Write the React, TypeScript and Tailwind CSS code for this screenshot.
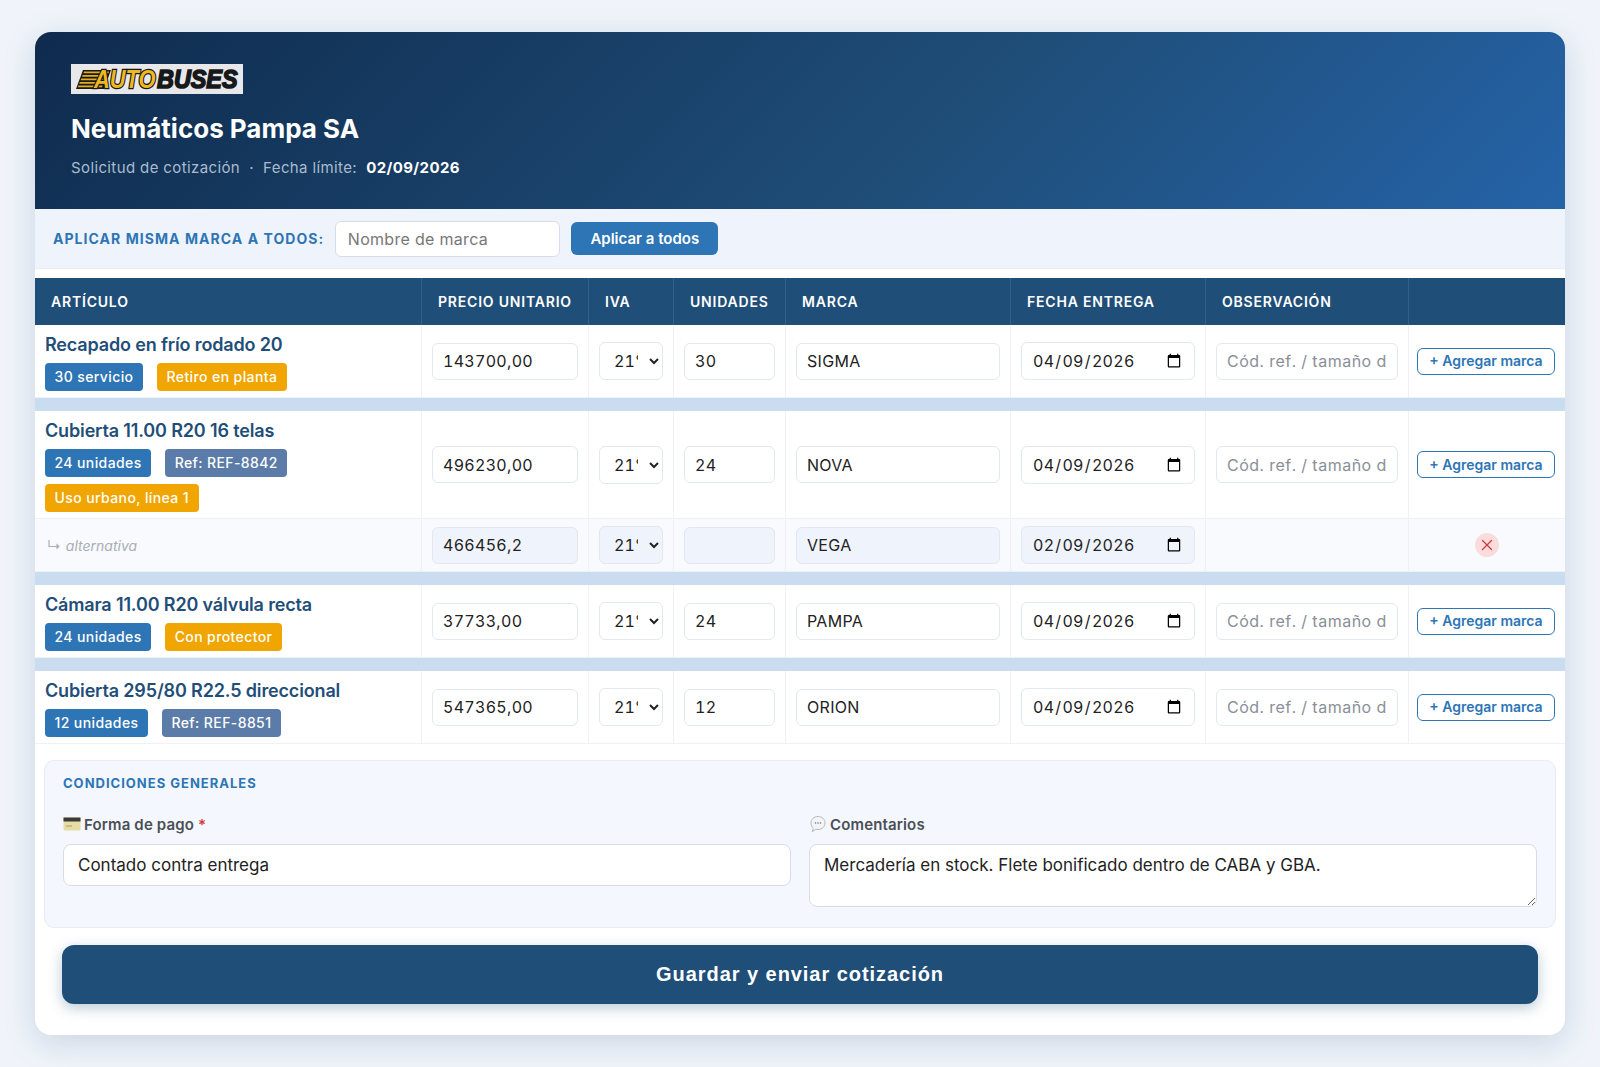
const ink = "font-['Inter','Noto_Sans',sans-serif]"

const fieldBase =
  "h-[37px] w-full rounded-[6px] border border-[#e2e7f0] px-[10px] text-[16px] tabular-nums tracking-[0.3px] text-[#222] outline-none placeholder:tracking-[0.5px] placeholder:text-[#8a8f98]"

const Logo = () => (
  <svg width="172" height="30" viewBox="0 0 172 30" className="block">
    <rect width="172" height="30" fill="#e8e8ea" />
    <polygon points="12,6 40,6 33,25 5,25" fill="#17181a" />
    <g fill="#e3ac1c">
      <polygon points="13,7.500 38,7.500 37.400,9.300 12.400,9.300" />
      <polygon points="11.600,11 36,11 35.400,12.800 11,12.800" />
      <polygon points="10.200,14.500 34.600,14.500 34,16.300 9.600,16.300" />
      <polygon points="8.800,18 33,18 32.400,19.800 8.200,19.800" />
      <polygon points="7.400,21.500 31.600,21.500 31,23.300 6.800,23.300" />
    </g>
    <text transform="translate(23 24) scale(0.84 1)" fontFamily="'Liberation Sans',sans-serif" fontWeight="700" fontStyle="italic" fontSize="26" fill="#eeb91f" stroke="#17181a" strokeWidth="2.6" paintOrder="stroke">AUTO</text>
    <text transform="translate(86 24) scale(0.9 1)" fontFamily="'Liberation Sans',sans-serif" fontWeight="700" fontStyle="italic" fontSize="26" fill="#17181a" stroke="#17181a" strokeWidth="1.6">BUSES</text>
  </svg>
)

const Badge = ({ tone, children }: { tone: string; children: string }) => (
  <span className={`inline-flex h-[28px] items-center rounded-[4px] px-[9.5px] pb-px text-[14px] font-medium tracking-[0.4px] text-white ${tone}`}>
    {children}
  </span>
)

const Cell = ({ children, className = "" }: { children?: React.ReactNode; className?: string }) => (
  <td className={`border-b border-r border-[#eef1f6] p-[10px] align-middle last:border-r-0 ${className}`}>{children}</td>
)

const IvaSelect = ({ alt }: { alt?: boolean }) => (
  <select
    defaultValue="21"
    className={`h-[38px] w-full rounded-[6px] border border-[#e2e7f0] pl-[10px] pr-[8px] text-[16px] tabular-nums text-[#222] outline-none ${alt ? "bg-[#eff3fb]" : "bg-white"}`}
  >
    <option value="21">21%</option>
    <option value="10">10.5%</option>
  </select>
)

const DateInput = ({ value, alt }: { value: string; alt?: boolean }) => (
  <input
    type="date"
    defaultValue={value}
    className={`h-[38px] w-full rounded-[6px] border border-[#e2e7f0] px-[10px] text-[16px] tabular-nums tracking-[0.3px] text-[#222] outline-none ${alt ? "bg-[#eff3fb]" : "bg-white"}`}
  />
)

type Item = {
  name: string
  badges: { text: string; tone: string }[]
  price: string
  qty: string
  brand: string
}

const blue = "bg-[#2e75b6]"
const slate = "bg-[#5b7ba8]"
const amber = "bg-[#f0a500]"

const items: Item[] = [
  {
    name: "Recapado en frío rodado 20",
    badges: [
      { text: "30 servicio", tone: blue },
      { text: "Retiro en planta", tone: amber },
    ],
    price: "143700,00",
    qty: "30",
    brand: "SIGMA",
  },
  {
    name: "Cubierta 11.00 R20 16 telas",
    badges: [
      { text: "24 unidades", tone: blue },
      { text: "Ref: REF-8842", tone: slate },
      { text: "Uso urbano, línea 1", tone: amber },
    ],
    price: "496230,00",
    qty: "24",
    brand: "NOVA",
  },
  {
    name: "Cámara 11.00 R20 válvula recta",
    badges: [
      { text: "24 unidades", tone: blue },
      { text: "Con protector", tone: amber },
    ],
    price: "37733,00",
    qty: "24",
    brand: "PAMPA",
  },
  {
    name: "Cubierta 295/80 R22.5 direccional",
    badges: [
      { text: "12 unidades", tone: blue },
      { text: "Ref: REF-8851", tone: slate },
    ],
    price: "547365,00",
    qty: "12",
    brand: "ORION",
  },
]

const heads = ["Artículo", "Precio unitario", "IVA", "Unidades", "Marca", "Fecha entrega", "Observación", ""]

const Row = ({ item }: { item: Item }) => (
  <tr>
    <Cell className="pb-[6px] pt-[8px]">
      <div className="text-[18px] font-semibold leading-[24px] tracking-[-0.15px] text-[#1f4e79]">{item.name}</div>
      <div className="mt-[6px] flex flex-wrap gap-x-[14px] gap-y-[7px]">
        {item.badges.map((b) => (
          <Badge key={b.text} tone={b.tone}>{b.text}</Badge>
        ))}
      </div>
    </Cell>
    <Cell><input defaultValue={item.price} className={`${fieldBase} bg-white`} /></Cell>
    <Cell><IvaSelect /></Cell>
    <Cell><input defaultValue={item.qty} className={`${fieldBase} bg-white`} /></Cell>
    <Cell><input defaultValue={item.brand} className={`${fieldBase} bg-white`} /></Cell>
    <Cell><DateInput value="2026-04-09" /></Cell>
    <Cell><input placeholder="Cód. ref. / tamaño de cubierta" className={`${fieldBase} bg-white`} /></Cell>
    <Cell className="pl-[8px]">
      <button className="block h-[27px] w-full rounded-[6px] border border-[#2e75b6] bg-white pb-px text-[14px] font-semibold text-[#2e75b6]">
        + Agregar marca
      </button>
    </Cell>
  </tr>
)

const AltRow = () => (
  <tr className="bg-[#f8fafd]">
    <Cell className="py-[7px] pl-[12px]">
      <span className="text-[14px] italic text-[#a9aeb6]">
        <span className="mr-[5px] not-italic">↳</span>alternativa
      </span>
    </Cell>
    <Cell className="py-[7px]"><input defaultValue="466456,2" className={`${fieldBase} bg-[#eff3fb]`} /></Cell>
    <Cell className="py-[7px]"><IvaSelect alt /></Cell>
    <Cell className="py-[7px]"><input className={`${fieldBase} bg-[#eff3fb]`} /></Cell>
    <Cell className="py-[7px]"><input defaultValue="VEGA" className={`${fieldBase} bg-[#eff3fb]`} /></Cell>
    <Cell className="py-[7px]"><DateInput value="2026-02-09" alt /></Cell>
    <Cell className="py-[7px]" />
    <Cell className="py-[7px] text-center">
      <button className="inline-flex h-[24px] w-[24px] items-center justify-center rounded-full bg-[#fbdcdc]">
        <svg width="12" height="12" viewBox="0 0 12 12" fill="none" stroke="#d0393e" strokeWidth="1.3" strokeLinecap="round">
          <path d="M1.5 1.5l9 9M10.5 1.5l-9 9" />
        </svg>
      </button>
    </Cell>
  </tr>
)

const Spacer = () => (
  <tr>
    <td colSpan={8} className="h-[13px] bg-[#c9dcf0] p-0" />
  </tr>
)

const CardIcon = () => (
  <svg width="18" height="16" viewBox="0 0 18 16" className="mr-[3px] inline-block align-[-2px]">
    <rect x="0.5" y="1.5" width="17" height="13" rx="1" fill="#e6dda6" />
    <rect x="0.5" y="1.5" width="17" height="4" fill="#3a3a3a" />
    <rect x="3" y="9" width="6" height="2" fill="#c9bd80" />
  </svg>
)

const ChatIcon = () => (
  <svg width="18" height="18" viewBox="0 0 18 18" className="mr-[3px] inline-block align-[-3px]">
    <path d="M9 1.500c4 0 7 2.800 7 6.500s-3 6.500-7 6.500c-.8 0-1.500-.1-2.200-.3-.9 1.200-2.200 1.900-3.800 2.100.8-.8 1.200-1.800 1.200-3C2.900 12 2 10.100 2 8c0-3.700 3-6.500 7-6.500z" fill="#f3f4f6" stroke="#b4b8bf" />
    <circle cx="6.500" cy="8" r="0.800" fill="#777" />
    <circle cx="9" cy="8" r="0.800" fill="#777" />
    <circle cx="11.500" cy="8" r="0.800" fill="#777" />
  </svg>
)

export default function App() {
  return (
    <div className={`min-h-screen bg-[#f0f4fa] px-[35px] pb-[31px] pt-[32px] ${ink}`}>
      <div className="overflow-hidden rounded-[16px] bg-white shadow-[0_8px_32px_rgba(31,78,121,0.18)]">
        <header className="h-[177px] bg-[linear-gradient(135deg,#0f2b4e_0%,#1f4e79_60%,#2563a8_100%)] px-[36px] pt-[32px]">
          <Logo />
          <h1 className="mt-[19px] text-[26px] font-bold leading-[32px] text-white">Neumáticos Pampa SA</h1>
          <p className="mt-[12px] text-[15px] leading-[22px] tracking-[0.38px] text-[#a9bccf]">
            Solicitud de cotización &nbsp;·&nbsp; Fecha límite: &nbsp;<strong className="font-bold text-white">02/09/2026</strong>
          </p>
        </header>

        <div className="flex h-[60px] items-center gap-[11px] border-b border-[#e8edf5] bg-[#eff3fb] px-[18px]">
          <span className="text-[14px] font-bold tracking-[1.05px] text-[#2e75b6]">APLICAR MISMA MARCA A TODOS:</span>
          <input placeholder="Nombre de marca" className="h-[36px] w-[225px] rounded-[6px] border border-[#d6dde8] bg-white px-[11.5px] text-[16px] outline-none placeholder:tracking-[0.3px] placeholder:text-[#777]" />
          <button className="h-[33px] w-[147px] rounded-[6px] bg-[#2e75b6] pt-px text-[15px] font-semibold text-white">Aplicar a todos</button>
        </div>

        <table className="mt-[9px] w-full table-fixed border-separate border-spacing-0">
          <colgroup>
            <col className="w-[387px]" />
            <col className="w-[167px]" />
            <col className="w-[85px]" />
            <col className="w-[112px]" />
            <col className="w-[225px]" />
            <col className="w-[195px]" />
            <col className="w-[203px]" />
            <col className="w-[156px]" />
          </colgroup>
          <thead>
            <tr className="h-[47px] bg-[#1f4e79]">
              {heads.map((h, i) => (
                <th key={i} className="border-r border-[#34618a] px-[16px] text-left text-[14px] font-semibold uppercase tracking-[0.8px] text-white last:border-r-0">
                  {h}
                </th>
              ))}
            </tr>
          </thead>
          <tbody>
            <Row item={items[0]} />
            <Spacer />
            <Row item={items[1]} />
            <AltRow />
            <Spacer />
            <Row item={items[2]} />
            <Spacer />
            <Row item={items[3]} />
          </tbody>
        </table>

        <div className="mx-[9px] mt-[16px] rounded-[10px] border border-[#e6ecf5] bg-[#f4f7fd] px-[18px] pb-[20px] pt-[13px]">
          <div className="text-[13px] font-bold tracking-[1px] text-[#2e75b6]">CONDICIONES GENERALES</div>
          <div className="mt-[21px] grid grid-cols-2 gap-x-[18px]">
            <div>
              <label className="mb-[9px] block text-[15px] font-semibold leading-[20px] tracking-[0.15px] text-[#4a4f57]">
                <CardIcon />Forma de pago <span className="text-[#d0393e]">*</span>
              </label>
              <input defaultValue="Contado contra entrega" className="h-[42px] w-full rounded-[8px] border border-[#d6dde8] bg-white px-[14px] text-[17px] text-[#222] outline-none" />
            </div>
            <div>
              <label className="mb-[9px] block text-[15px] font-semibold leading-[20px] tracking-[0.15px] text-[#4a4f57]">
                <ChatIcon />Comentarios
              </label>
              <textarea defaultValue="Mercadería en stock. Flete bonificado dentro de CABA y GBA." className="block h-[63px] w-full rounded-[8px] border border-[#d6dde8] bg-white px-[14px] py-[9px] text-[17px] leading-[22px] text-[#222] outline-none" />
            </div>
          </div>
        </div>

        <div className="px-[27px] pb-[31px] pt-[17px]">
          <button className="h-[59px] w-full rounded-[12px] bg-[#1f4e79] font-['Liberation_Sans',sans-serif] text-[20px] font-bold tracking-[0.95px] text-white shadow-[0_4px_14px_rgba(31,78,121,0.3)]">
            Guardar y enviar cotización
          </button>
        </div>
      </div>
    </div>
  )
}
